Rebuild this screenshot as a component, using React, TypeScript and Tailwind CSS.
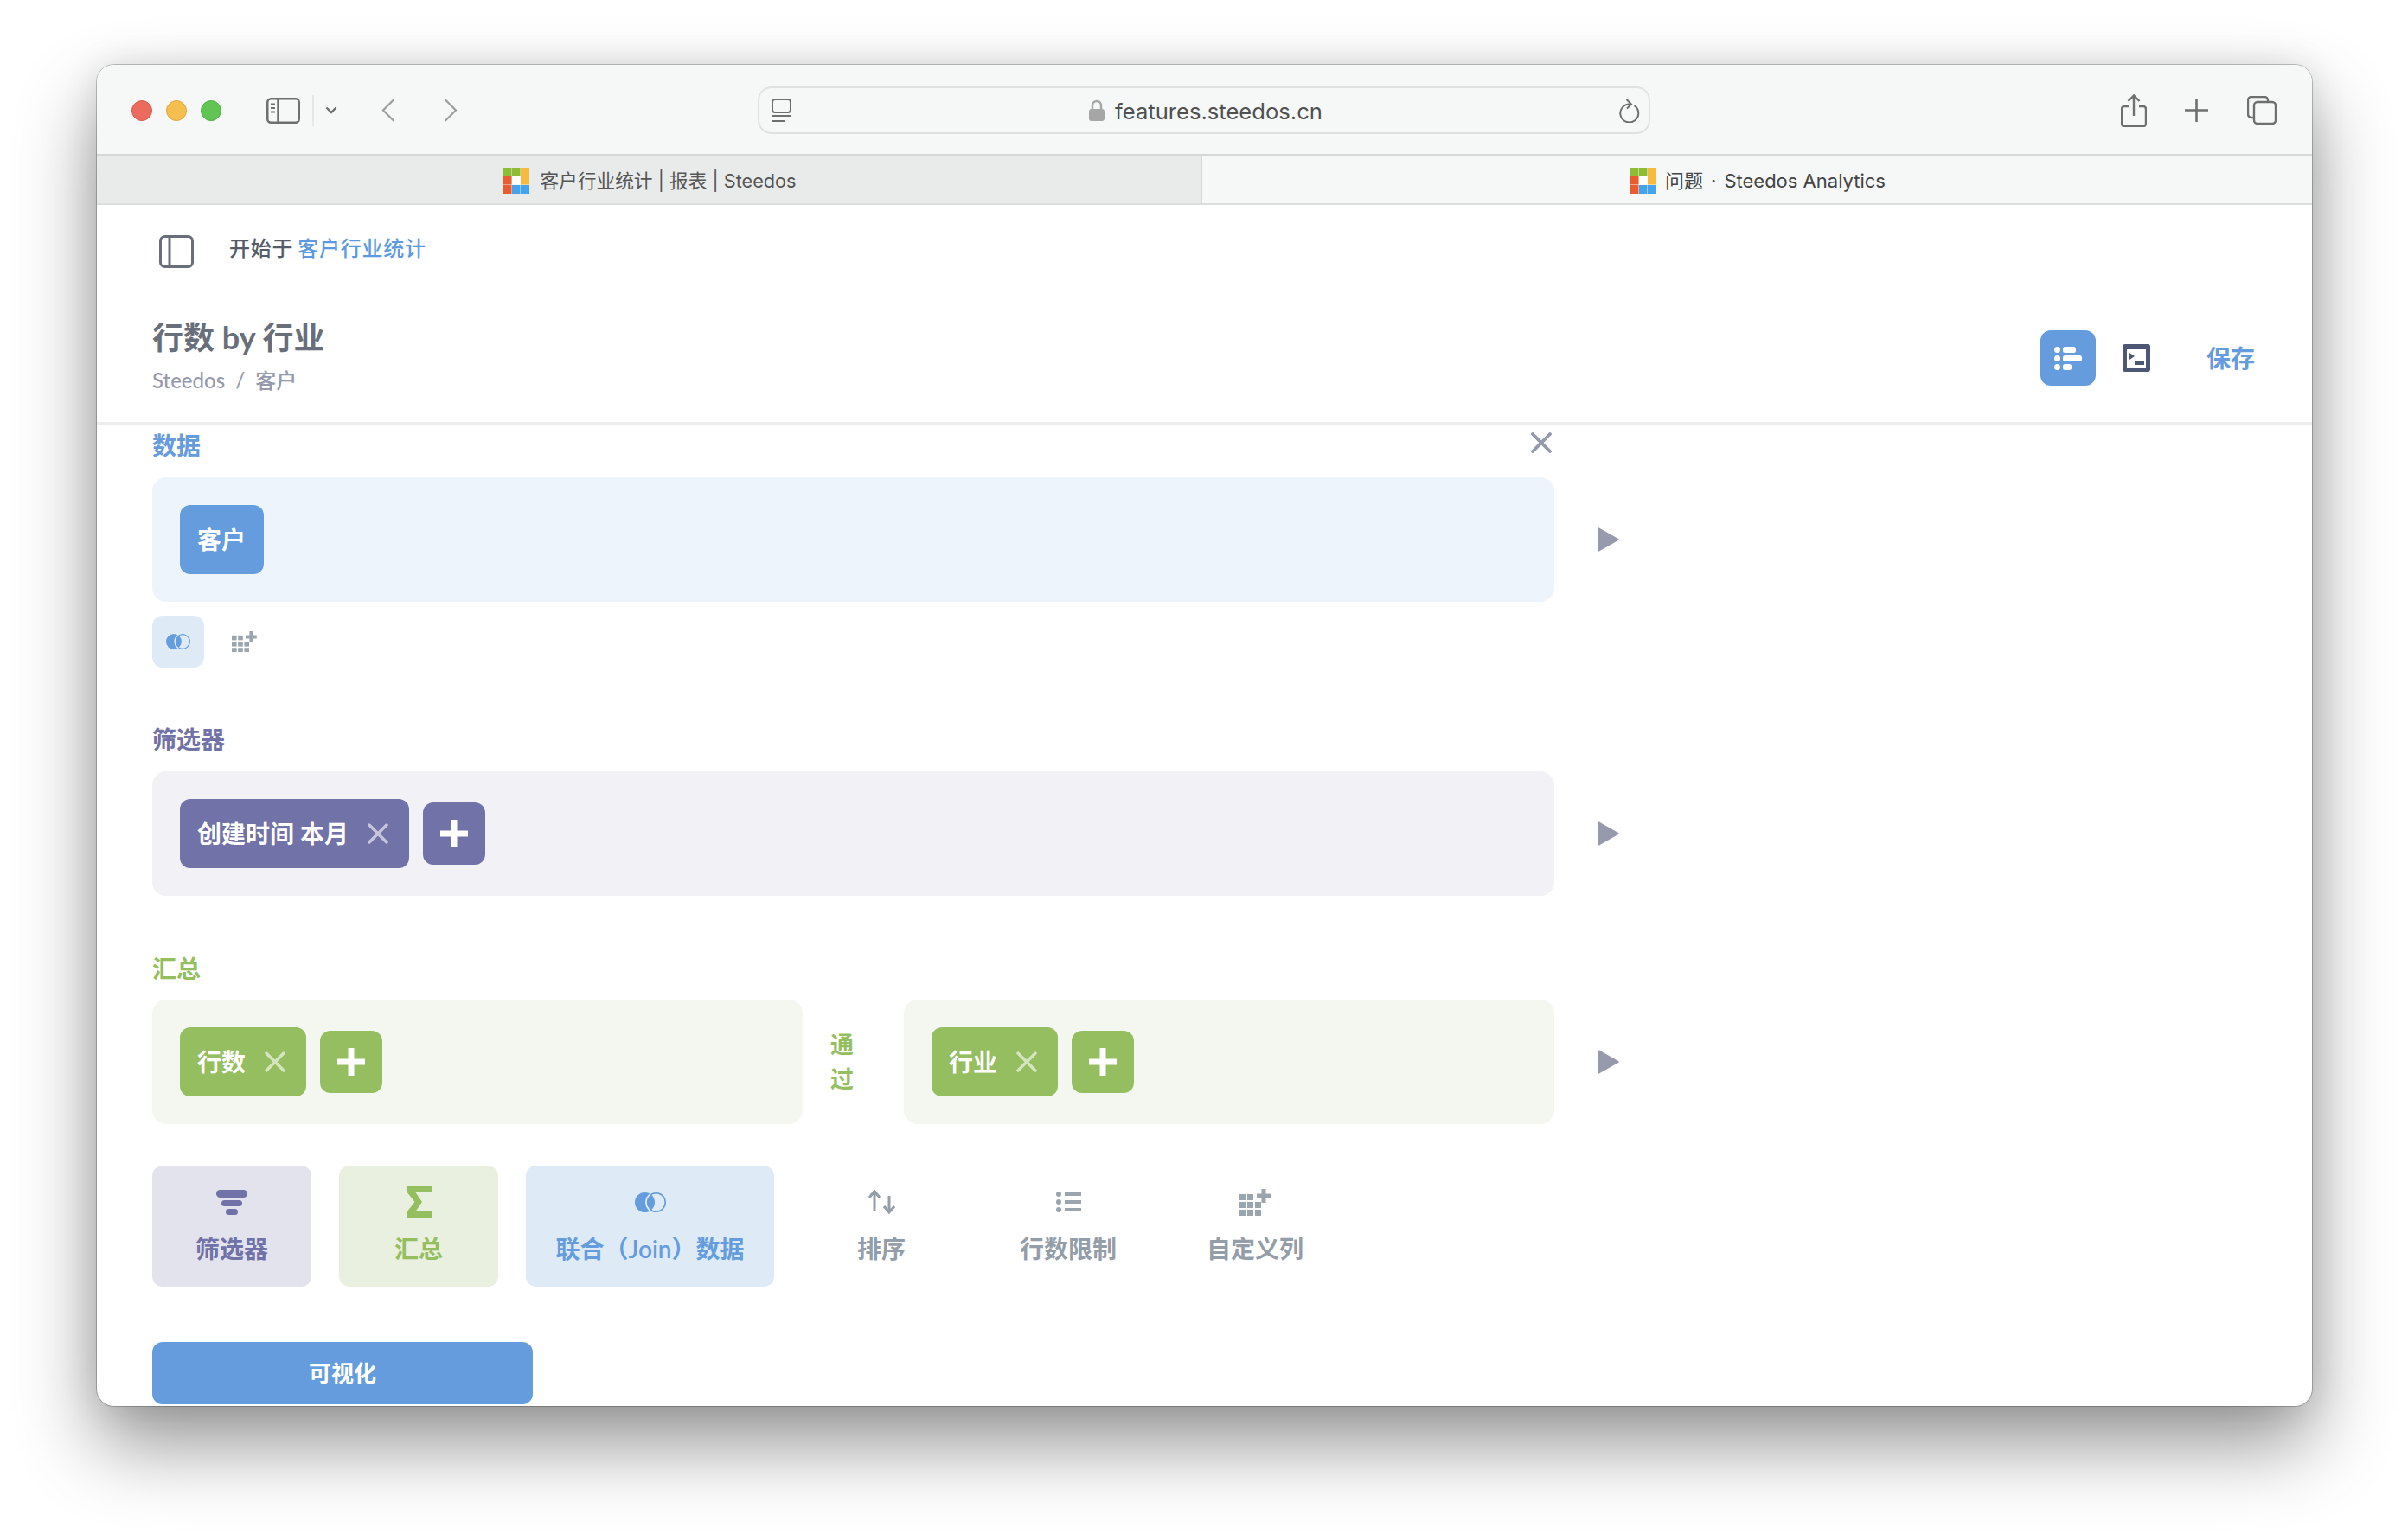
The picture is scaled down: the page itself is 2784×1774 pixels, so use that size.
import React from 'react';

const sans = 'font-["Lato","Noto_Sans_CJK_SC",sans-serif]';
const ui = 'font-["Inter","Noto_Sans_CJK_SC",sans-serif]';

function Favicon() {
  return (
    <svg width="30" height="30" viewBox="0 0 30 30" className="shrink-0">
      <rect x="0" y="0" width="9.5" height="9.5" fill="#8fbc35" />
      <rect x="10" y="0" width="9.5" height="9.5" fill="#8fbc35" />
      <rect x="20" y="0" width="10" height="9.5" fill="#f6ba3f" />
      <rect x="0" y="10" width="9.5" height="9.5" fill="#e85c30" />
      <rect x="10" y="10" width="9.5" height="9.5" fill="#ffffff" />
      <rect x="20" y="10" width="10" height="9.5" fill="#f6ba3f" />
      <rect x="0" y="20" width="9.5" height="10" fill="#e85c30" />
      <rect x="10" y="20" width="9.5" height="10" fill="#43a3ef" />
      <rect x="20" y="20" width="10" height="10" fill="#43a3ef" />
    </svg>
  );
}

function CloseX({ size = 24, color = 'white', opacity = 0.6, sw = 3.5 }: { size?: number; color?: string; opacity?: number; sw?: number }) {
  return (
    <svg width={size} height={size} viewBox="0 0 24 24" className="shrink-0" opacity={opacity}>
      <path d="M2 2 L22 22 M22 2 L2 22" stroke={color} strokeWidth={sw} strokeLinecap="round" fill="none" />
    </svg>
  );
}

function PlayArrow() {
  return (
    <svg width="25" height="28" viewBox="0 0 25 28" className="ml-[50px] shrink-0">
      <path d="M1 1 L24 14 L1 27 Z" fill="#969aac" stroke="#969aac" strokeWidth="1.5" strokeLinejoin="round" />
    </svg>
  );
}

function JoinIcon({ width = 36, height = 23 }: { width?: number; height?: number }) {
  return (
    <svg width={width} height={height} viewBox="0 0 36 23" className="shrink-0">
      <circle cx="24.5" cy="11.5" r="10.7" fill="none" stroke="#649cdd" strokeWidth="1.6" />
      <circle cx="11.5" cy="11.5" r="11.5" fill="#649cdd" />
      <path d="M18 2 A11.5 11.5 0 0 0 18 21" fill="none" stroke="#dfeaf7" strokeWidth="1.8" />
    </svg>
  );
}

function GridPlus({ color = '#9aa5ad', scale = 1 }: { color?: string; scale?: number }) {
  const cells = [[0, 6], [9, 6], [0, 15], [9, 15], [18, 15], [0, 24], [9, 24], [18, 24]];
  return (
    <svg width={36 * scale} height={31 * scale} viewBox="0 0 36 31" className="shrink-0">
      {cells.map(([x, y]) => (
        <rect key={`${x}-${y}`} x={x} y={y} width="7" height="7" fill={color} />
      ))}
      <path d="M28 0 V16 M20 8 H36" stroke={color} strokeWidth="5" fill="none" />
    </svg>
  );
}

function Chip({ bg, label, removable = true }: { bg: string; label: string; removable?: boolean }) {
  return (
    <div className={`${bg} h-[80px] rounded-[12px] pl-[20px] ${removable ? 'pr-[24px]' : 'pr-[21px]'} flex items-center gap-[22px] shrink-0`}>
      <span className={`${sans} text-[28px] font-semibold text-white whitespace-nowrap`}>{label}</span>
      {removable && <CloseX size={24} />}
    </div>
  );
}

function AddButton({ bg }: { bg: string }) {
  return (
    <div className={`${bg} w-[72px] h-[72px] rounded-[12px] flex items-center justify-center shrink-0`}>
      <svg width="32" height="32" viewBox="0 0 32 32">
        <path d="M16 0 V32 M0 16 H32" stroke="white" strokeWidth="7" fill="none" />
      </svg>
    </div>
  );
}

function ActionButton({ bg, color, width, icon, label }: { bg: string; color: string; width: string; icon: React.ReactNode; label: string }) {
  return (
    <div className={`${bg} ${width} h-[140px] rounded-[12px] flex flex-col items-center shrink-0`}>
      <div className="h-[36px] mt-[24px] flex items-center justify-center">{icon}</div>
      <span className={`${sans} ${color} text-[28px] font-semibold leading-[40px] mt-[16px] whitespace-nowrap`}>{label}</span>
    </div>
  );
}

export default function App() {
  return (
    <div className="w-[2784px] h-[1774px] bg-white overflow-hidden pt-[75px] pl-[112px]">
      <div className="w-[2561px] h-[1551px] bg-white rounded-[20px] overflow-hidden flex flex-col shadow-[0_0_0_1px_rgba(0,0,0,0.22),0_44px_90px_rgba(0,0,0,0.42),0_0_40px_rgba(0,0,0,0.1)]">
        {/* safari toolbar */}
        <div className="h-[105px] bg-[#f6f8f7] border-b-2 border-[#d6d8d8] flex items-center pl-[40px] pt-[2px] shrink-0">
          <div className="flex gap-[16px]">
            <div className="w-[24px] h-[24px] rounded-full bg-[#ec6a5e] border border-[#d65a4f]" />
            <div className="w-[24px] h-[24px] rounded-full bg-[#f5bf4f] border border-[#dda63f]" />
            <div className="w-[24px] h-[24px] rounded-full bg-[#61c554] border border-[#52ad45]" />
          </div>
          <svg width="39" height="30" viewBox="0 0 39 30" className="ml-[52px] shrink-0">
            <rect x="1.25" y="1.25" width="36.5" height="27.5" rx="4" fill="none" stroke="#6e706f" strokeWidth="2.5" />
            <path d="M13.5 1 V29" stroke="#6e706f" strokeWidth="2.5" />
            <path d="M5 7.5 H10 M5 12 H10 M5 16.5 H10" stroke="#6e706f" strokeWidth="1.8" />
          </svg>
          <div className="w-[2px] h-[36px] bg-[#e6e8e7] ml-[14px]" />
          <svg width="14" height="9" viewBox="0 0 14 9" className="ml-[13px] shrink-0">
            <path d="M1.5 1.5 L7 7 L12.5 1.5" stroke="#6e706f" strokeWidth="2.4" fill="none" />
          </svg>
          <svg width="16" height="27" viewBox="0 0 16 27" className="ml-[51px] shrink-0">
            <path d="M14.5 1 L2 13.5 L14.5 26" stroke="#9d9e9e" strokeWidth="2.2" fill="none" />
          </svg>
          <svg width="16" height="27" viewBox="0 0 16 27" className="ml-[56px] shrink-0">
            <path d="M1.5 1 L14 13.5 L1.5 26" stroke="#9d9e9e" strokeWidth="2.2" fill="none" />
          </svg>
          <div className="ml-[347px] w-[1032px] h-[55px] rounded-[16px] border-2 border-[#dfe1e0] flex items-center pl-[14px] pr-[10px] shrink-0">
            <svg width="23" height="27" viewBox="0 0 23 27" className="shrink-0">
              <rect x="1" y="1" width="21" height="15" rx="3" fill="none" stroke="#6e706f" strokeWidth="2" />
              <path d="M0 20 H23 M0 26 H15" stroke="#6e706f" strokeWidth="2" />
            </svg>
            <svg width="18" height="25" viewBox="0 0 18 25" className="ml-[344px] shrink-0">
              <path d="M4 12 V7 a5 5 0 0 1 10 0 V12" fill="none" stroke="#a6a6a6" strokeWidth="2.4" />
              <rect x="0" y="11" width="18" height="14" rx="3" fill="#a6a6a6" />
            </svg>
            <span className={`${ui} ml-[12px] pt-[3px] text-[25.6px] leading-[34px] text-[#505050] whitespace-nowrap`}>features.steedos.cn</span>
            <svg width="24" height="28" viewBox="0 0 24 28" className="ml-auto shrink-0">
              <path d="M17.5 8.2 A10.5 10.5 0 1 1 12 6.5" fill="none" stroke="#6e706f" strokeWidth="2" />
              <path d="M8.5 1 L14 6.5 L9 11.5" fill="none" stroke="#6e706f" strokeWidth="2" />
            </svg>
          </div>
          <svg width="30" height="38" viewBox="0 0 30 38" className="ml-[544px] shrink-0">
            <path d="M9 14 H4 a3 3 0 0 0 -3 3 V34 a3 3 0 0 0 3 3 H26 a3 3 0 0 0 3 -3 V17 a3 3 0 0 0 -3 -3 H21" fill="none" stroke="#6e706f" strokeWidth="2.4" />
            <path d="M15 25 V2 M8.5 8 L15 1.5 L21.5 8" fill="none" stroke="#6e706f" strokeWidth="2.4" />
          </svg>
          <svg width="27" height="27" viewBox="0 0 27 27" className="ml-[44px] shrink-0">
            <path d="M13.5 0 V27 M0 13.5 H27" stroke="#6e706f" strokeWidth="2.6" />
          </svg>
          <svg width="34" height="33" viewBox="0 0 34 33" className="ml-[45px] shrink-0">
            <path d="M7.5 25 H5 a4 4 0 0 1 -4 -4 V5 a4 4 0 0 1 4 -4 H20 a4 4 0 0 1 4 4 V7" fill="none" stroke="#6e706f" strokeWidth="2.4" />
            <rect x="8" y="7" width="25" height="25" rx="4" fill="none" stroke="#6e706f" strokeWidth="2.4" />
          </svg>
        </div>

        {/* tabs */}
        <div className="h-[57px] flex shrink-0 border-b-2 border-[#dcdedd]">
          <div className="w-[1278px] bg-[#e9ebeb] border-r border-[#d6d8d8] flex items-center justify-center gap-[12px] pl-[2px] pt-[3px]">
            <Favicon />
            <span className={`${ui} text-[21.7px] text-[#555555] whitespace-nowrap`}>客户行业统计 | 报表 | Steedos</span>
          </div>
          <div className="flex-1 bg-[#f6f8f7] flex items-center justify-center gap-[10px] pl-[2px] pt-[3px]">
            <Favicon />
            <span className={`${ui} text-[22px] text-[#444444] whitespace-nowrap`}>
              问题<span className="mx-[9px]">·</span>Steedos Analytics
            </span>
          </div>
        </div>

        {/* query header */}
        <div className="h-[255px] border-b-4 border-[#eeeeee] relative shrink-0">
          <div className="flex items-center pl-[72px] pt-[32px]">
            <svg width="40" height="38" viewBox="0 0 40 38" className="shrink-0">
              <rect x="1.5" y="1.5" width="37" height="35" rx="5" fill="none" stroke="#696e7b" strokeWidth="3" />
              <path d="M12 1 V37" stroke="#696e7b" strokeWidth="3" />
            </svg>
            <span className={`${sans} ml-[41px] pb-[8px] text-[24px] tracking-[0.75px] font-medium text-[#555b68] whitespace-nowrap`}>
              开始于<span className="ml-[5px] text-[#5b9ae0]">客户行业统计</span>
            </span>
          </div>
          <div className="pl-[64px] mt-[52px]">
            <div className={`${sans} text-[36px] leading-[50px] font-bold text-[#696e7b]`}>行数 by 行业</div>
            <div className={`${sans} text-[24px] leading-[36px] mt-[7px] font-medium text-[#949aab]`}>Steedos&nbsp;&nbsp;/&nbsp;&nbsp;客户</div>
          </div>
          <div className="absolute right-[66px] top-[145px] flex items-center">
            <div className="w-[64px] h-[64px] rounded-[12px] bg-[#649cdd] flex items-center justify-center">
              <svg width="32" height="27" viewBox="0 0 32 27">
                <circle cx="3.5" cy="3.5" r="3.5" fill="white" />
                <circle cx="3.5" cy="13.5" r="3.5" fill="white" />
                <circle cx="3.5" cy="23.5" r="3.5" fill="white" />
                <rect x="10" y="0" width="15" height="7" rx="2.5" fill="white" />
                <rect x="10" y="10" width="22" height="7" rx="2.5" fill="white" />
                <rect x="10" y="20" width="10" height="7" rx="2.5" fill="white" />
              </svg>
            </div>
            <svg width="32" height="32" viewBox="0 0 32 32" className="ml-[31px]">
              <path fillRule="evenodd" d="M3 0 H29 a3 3 0 0 1 3 3 V29 a3 3 0 0 1 -3 3 H3 a3 3 0 0 1 -3 -3 V3 a3 3 0 0 1 3 -3 Z M5 6 V27 H27 V6 Z" fill="#4c5773" />
              <path d="M8 10 L14 14 L8 18 Z" fill="#4c5773" />
              <rect x="14" y="20" width="11" height="4" fill="#4c5773" />
            </svg>
            <span className={`${sans} ml-[65px] text-[28px] font-semibold text-[#649cdd]`}>保存</span>
          </div>
        </div>

        {/* notebook */}
        <div className="pl-[64px] flex-1 min-h-0 overflow-hidden">
          {/* data */}
          <div className="w-[1621px] h-[40px] mt-[3px] flex justify-between items-start">
            <span className={`${sans} text-[28px] leading-[40px] font-semibold text-[#649cdd]`}>数据</span>
            <div className="mt-[5px] mr-[3px]">
              <CloseX color="#949aab" opacity={1} sw={3.8} />
            </div>
          </div>
          <div className="flex items-center mt-[17px]">
            <div className="w-[1621px] h-[144px] rounded-[16px] bg-[#edf4fc] flex items-center pl-[32px]">
              <Chip bg="bg-[#649cdd]" label="客户" removable={false} />
            </div>
            <PlayArrow />
          </div>
          <div className="flex items-center mt-[16px]">
            <div className="w-[60px] h-[60px] rounded-[12px] bg-[#dfeaf7] flex items-center justify-center">
              <JoinIcon width={28} height={18} />
            </div>
            <div className="ml-[32px]">
              <GridPlus scale={0.8} />
            </div>
          </div>

          {/* filter */}
          <div className={`${sans} text-[28px] leading-[40px] font-semibold text-[#7172a7] mt-[63px]`}>筛选器</div>
          <div className="flex items-center mt-[17px]">
            <div className="w-[1621px] h-[144px] rounded-[16px] bg-[#f1f1f6] flex items-center pl-[32px] gap-[16px]">
              <Chip bg="bg-[#7172a7]" label="创建时间 本月" />
              <AddButton bg="bg-[#7172a7]" />
            </div>
            <PlayArrow />
          </div>

          {/* summarize */}
          <div className={`${sans} text-[28px] leading-[40px] font-semibold text-[#95be61] mt-[64px]`}>汇总</div>
          <div className="flex items-center mt-[16px]">
            <div className="w-[1621px] flex items-center">
              <div className="w-[752px] h-[144px] rounded-[16px] bg-[#f4f7ef] flex items-center pl-[32px] gap-[16px]">
                <Chip bg="bg-[#95be61]" label="行数" />
                <AddButton bg="bg-[#95be61]" />
              </div>
              <div className={`${sans} w-[117px] pl-[32px] text-[27px] leading-[40px] font-semibold text-[#95be61]`}>
                <div>通</div>
                <div>过</div>
              </div>
              <div className="w-[752px] h-[144px] rounded-[16px] bg-[#f4f7ef] flex items-center pl-[32px] gap-[16px]">
                <Chip bg="bg-[#95be61]" label="行业" />
                <AddButton bg="bg-[#95be61]" />
              </div>
            </div>
            <PlayArrow />
          </div>

          {/* steps */}
          <div className="flex gap-[32px] mt-[48px]">
            <ActionButton
              bg="bg-[#e3e3ed]"
              color="text-[#7172a7]"
              width="w-[184px]"
              label="筛选器"
              icon={
                <svg width="36" height="29" viewBox="0 0 36 29">
                  <rect x="0" y="0" width="36" height="9" rx="4.5" fill="#7172a7" />
                  <rect x="6" y="12" width="24" height="7" rx="3.5" fill="#7172a7" />
                  <rect x="11" y="22" width="14" height="7" rx="3.5" fill="#7172a7" />
                </svg>
              }
            />
            <ActionButton
              bg="bg-[#e9f0df]"
              color="text-[#95be61]"
              width="w-[184px]"
              label="汇总"
              icon={
                <svg width="29" height="36" viewBox="0 0 29 36">
                  <path d="M0 0 H29 V7 H10.5 L18 18 L10.5 29 H29 V36 H0 V30 L9.5 18 L0 6 Z" fill="#95be61" />
                </svg>
              }
            />
            <ActionButton bg="bg-[#dfeaf7]" color="text-[#649cdd]" width="w-[287px]" label="联合（Join）数据" icon={<JoinIcon />} />
            <ActionButton
              bg=""
              color="text-[#949ea8]"
              width="w-[184px]"
              label="排序"
              icon={
                <svg width="34" height="28" viewBox="0 0 34 28">
                  <path d="M9 25 V2 M3 9 L9 1.5 L15 9" stroke="#949ea8" strokeWidth="3" fill="none" />
                  <path d="M26 7 V26 M20 19 L26 26 L32 19" stroke="#949ea8" strokeWidth="3" fill="none" />
                </svg>
              }
            />
            <ActionButton
              bg=""
              color="text-[#949ea8]"
              width="w-[184px]"
              label="行数限制"
              icon={
                <svg width="29" height="24" viewBox="0 0 29 24">
                  <circle cx="3" cy="3" r="3" fill="#9aa5ad" />
                  <circle cx="3" cy="12" r="3" fill="#9aa5ad" />
                  <circle cx="3" cy="21" r="3" fill="#9aa5ad" />
                  <rect x="10" y="1" width="19" height="4" fill="#9aa5ad" />
                  <rect x="10" y="10" width="19" height="4" fill="#9aa5ad" />
                  <rect x="10" y="19" width="19" height="4" fill="#9aa5ad" />
                </svg>
              }
            />
            <ActionButton bg="" color="text-[#949ea8]" width="w-[184px]" label="自定义列" icon={<GridPlus />} />
          </div>

          <button className={`${sans} block w-[440px] h-[72px] mt-[64px] rounded-[12px] bg-[#649cdd] text-white text-[26px] font-semibold`}>可视化</button>
        </div>
      </div>
    </div>
  );
}
